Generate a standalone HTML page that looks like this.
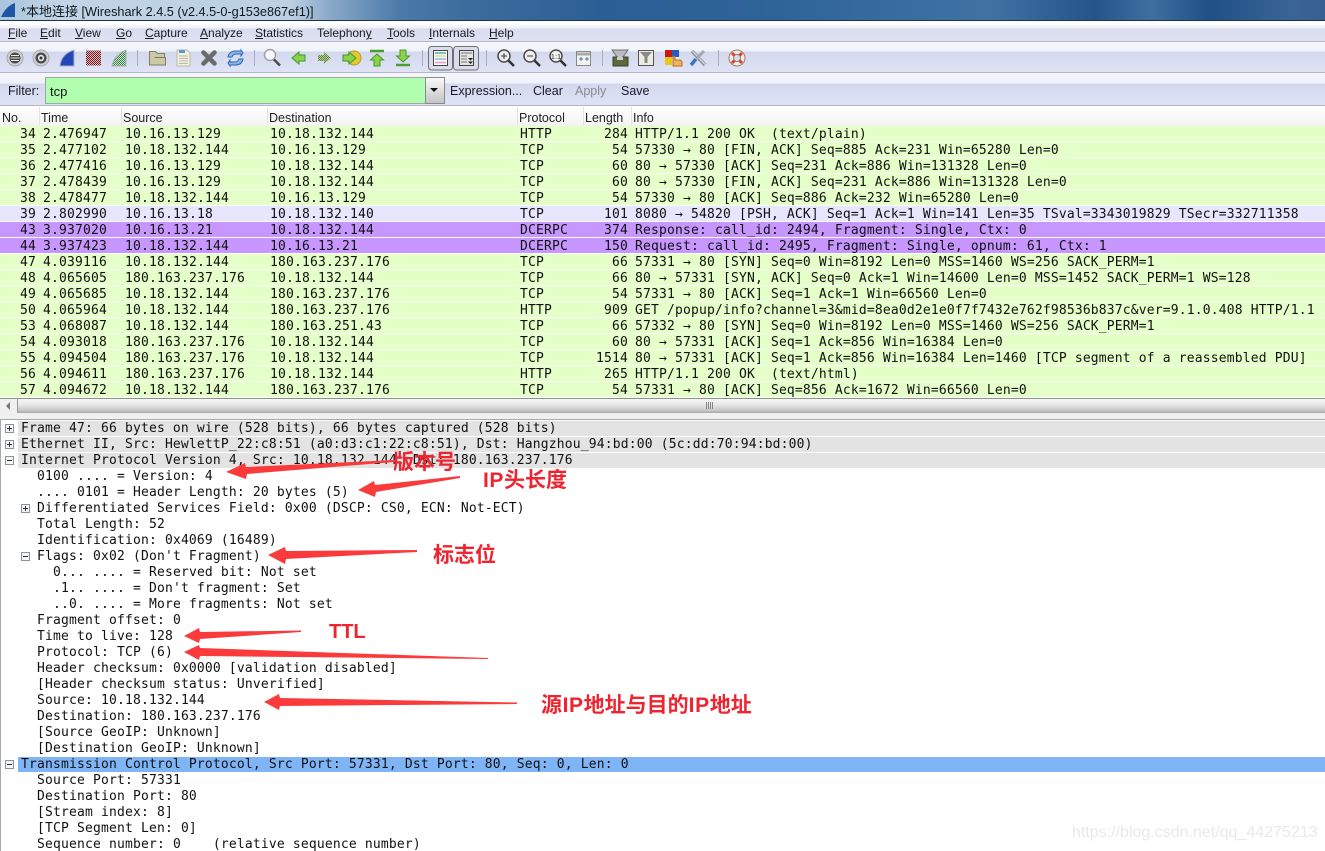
<!DOCTYPE html>
<html><head><meta charset="utf-8"><title>Wireshark</title>
<style>
html,body{margin:0;padding:0;background:#fff}
#p{position:relative;width:1325px;height:851px;overflow:hidden;background:#fff;font-family:"Liberation Sans","Noto Sans CJK SC",sans-serif;color:#111}
.a{position:absolute;white-space:pre}
.bar{position:absolute;left:0;width:1325px}
.mn{font-size:12px;top:26px;line-height:15px;color:#1a1a1a}
.mn u{text-decoration:underline}
.fb{font-size:12.5px;top:84px;line-height:15px;color:#1a1a2a}
.hd{font-size:12.5px;top:111px;line-height:15px;color:#222}
.sp{position:absolute;top:107px;height:18px;width:1px;background:#e2e2e2}
#rows{position:absolute;left:0;top:126px;width:1325px;font:13px/15px "DejaVu Sans Mono",monospace;letter-spacing:.17px;color:#111}
.r{position:relative;height:15px;border-bottom:1px solid #fff;white-space:pre}
.r span{position:absolute;top:1px}
.g{background:#e4ffc7}.v{background:#e7e6ff}.u{background:#c797ff}
.n{right:1289px}.t{left:43px}.s{left:125px}.d{left:270px}.o{left:520px}.l{right:697px}.i{left:635px}
#det{position:absolute;left:0;top:420px;width:1325px;font:13px/15px "DejaVu Sans Mono",monospace;letter-spacing:.17px;color:#111}
.q{position:relative;height:16px;white-space:pre}
.q b{font-weight:normal;position:absolute;top:1px}
.l0 b{left:21px}.l1 b{left:37px}.l2 b{left:53px}
.gr::before,.bl::before{content:"";position:absolute;left:18px;right:0;top:1px;height:15px;background:#e3e3e3}
.bl::before{background:#7fb5f7}
.bx{position:absolute;width:7px;height:7px;border:1px solid #8a93a0;background:#f4f4f4;top:4px}
.bx::before{content:"";position:absolute;left:1px;top:3px;width:5px;height:1px;background:#333}
.pl::after{content:"";position:absolute;left:3px;top:1px;width:1px;height:5px;background:#333}
.cn{position:absolute;color:#ee2430;font:bold 21px/26px "Liberation Sans","Noto Sans CJK SC",sans-serif;white-space:pre}
.cn i{font-style:normal;letter-spacing:.6px}
</style></head><body><div id="p">

<div class="bar" style="top:0;height:20px;background:linear-gradient(90deg,#a9c4dd 0,#c2d5e6 60px,#bdd0e3 290px,#8aa9c9 330px,#4b7aa8 400px,#3c6c9d 470px,#2c5f95 600px,#2e6398 760px,#4072a4 990px,#245489 1095px,#3f6fa1 1150px,#1f5086 1210px,#3a6496 1290px,#37608f 1325px)"></div>
<div class="a" style="left:21px;top:3px;font-size:12.7px;line-height:17px;color:#101820">*<span style="font-size:13px">本地连接</span> [Wireshark 2.4.5 (v2.4.5-0-g153e867ef1)]</div>
<svg class="a" style="left:0;top:0" width="18" height="20"><path d="M1 17 Q6 6 15 3 L15 17Z" fill="#1f55a8"/></svg>
<div class="bar" style="top:20px;height:1px;background:#1d3348"></div>
<div class="bar" style="top:21px;height:20px;background:linear-gradient(#f6f8fc 0,#fff 2px,#eef1f9 7px,#d9ddf0 8px,#dde1f3 100%)"></div>
<div class="bar" style="top:41px;height:1px;background:#b3b6c8"></div>
<div class="bar" style="top:42px;height:30px;background:linear-gradient(#f4f6fb 0,#f0f3fa 9px,#d3d8ee 10px,#dfe3f5 100%)"></div>
<div class="bar" style="top:72px;height:1px;background:#b3b6c8"></div>
<div class="bar" style="top:73px;height:32px;background:linear-gradient(#f4f6fb 0,#eff2fa 10px,#d3d8ee 11px,#dfe3f5 100%)"></div>
<div class="bar" style="top:105px;height:1px;background:#b3b6c8"></div>
<div class="bar" style="top:106px;height:20px;background:linear-gradient(#fff,#f3f3f3)"></div>

<div class="a mn" style="left:8px"><u>F</u>ile</div>
<div class="a mn" style="left:40px"><u>E</u>dit</div>
<div class="a mn" style="left:75px"><u>V</u>iew</div>
<div class="a mn" style="left:116px"><u>G</u>o</div>
<div class="a mn" style="left:145px"><u>C</u>apture</div>
<div class="a mn" style="left:200px"><u>A</u>nalyze</div>
<div class="a mn" style="left:255px"><u>S</u>tatistics</div>
<div class="a mn" style="left:317px">Telephon<u>y</u></div>
<div class="a mn" style="left:387px"><u>T</u>ools</div>
<div class="a mn" style="left:429px"><u>I</u>nternals</div>
<div class="a mn" style="left:489px"><u>H</u>elp</div>

<svg class="a" style="left:0;top:42px" width="760" height="30" viewBox="0 42 760 30">
<defs>
<pattern id="dr" width="2" height="2" patternUnits="userSpaceOnUse"><rect width="2" height="2" fill="#c8c8d0"/><rect width="1" height="1" fill="#8c0c10"/><rect x="1" y="1" width="1" height="1" fill="#8c0c10"/></pattern>
<pattern id="dg" width="2" height="2" patternUnits="userSpaceOnUse"><rect width="2" height="2" fill="#d8dce8"/><rect width="1" height="1" fill="#2f8a2f"/><rect x="1" y="1" width="1" height="1" fill="#2f8a2f"/></pattern>
<pattern id="dh" width="2" height="2" patternUnits="userSpaceOnUse"><rect width="2" height="2" fill="#b8c89a"/><rect width="1" height="1" fill="#5f8a3a"/><rect x="1" y="1" width="1" height="1" fill="#5f8a3a"/></pattern>
</defs>
<circle cx="15" cy="58" r="8" fill="#cfcfd4" stroke="#a8a8ae"/><circle cx="15" cy="58" r="5.5" fill="#4a4a4e"/><path d="M11 55.5h8M10.5 58h9M11 60.5h8" stroke="#e8e8e8"/>
<circle cx="41" cy="58" r="8" fill="#cfcfd4" stroke="#a8a8ae"/><circle cx="41" cy="58" r="5.5" fill="#4a4a4e"/><circle cx="41" cy="58" r="3.2" fill="#e8e8e8"/><circle cx="41" cy="58" r="1.5" fill="#333"/>
<path d="M60 66Q61 54 74 50L74 66Z" fill="#2347b8" stroke="#aab0c4"/>
<rect x="86" y="50.5" width="15" height="15" fill="url(#dr)"/>
<path d="M112 66Q114 55 126 50L126 66Z" fill="url(#dg)" stroke="#a8b0a8"/>
<path d="M137.5 50v16M254.5 50v16M422.5 50v16M486.5 50v16M602.500 50v16M718.500 50v16" stroke="#a9adbd"/>
<path d="M149.500 65V51.500h6l2 2h7v4h-9l-1 0h11v7.500z" fill="#cbc9a6" stroke="#7e7e62"/>
<path d="M177 50h10l3 3v13h-13z" fill="#f3f1de" stroke="#b9b9a8"/><path d="M179 50h6v3h-6z" fill="#5a96d8"/><path d="M179 56h9M179 58.500h9M179 61h9M179 63.500h9" stroke="#b8b8a8"/>
<path d="M203.500 52.500l11 11M214.500 52.500l-11 11" stroke="#6a6a6a" stroke-width="4.500" stroke-linecap="round"/>
<path d="M228 57q1-6 8-6h5v-1l2 3-2 3v-2h-5q-3 0-4 3z" fill="#8cb8e8" stroke="#2a68b8"/><path d="M243 59q-1 6-8 6h-5v1l-2-3 2-3v2h5q3 0 4-3z" fill="#8cb8e8" stroke="#2a68b8"/>
<circle cx="270" cy="55" r="5.500" fill="#f4f7fb" stroke="#a0a0a0" stroke-width="1.500"/><path d="M274 59.500l6 6" stroke="#4a4a4a" stroke-width="2.500"/>
<path d="M292 58l7-6v3h6v6h-6v3z" fill="#8ed04a" stroke="#3f9a2a"/>
<path d="M331 58l-7-6v3h-6v6h6v3z" fill="url(#dh)"/>
<circle cx="354" cy="58" r="7" fill="#e8c830" stroke="#b89a20"/><path d="M343 55h6v-3l7 6-7 6v-3h-6z" fill="#8ed04a" stroke="#3f9a2a"/>
<path d="M370 51h14" stroke="#4aa02a" stroke-width="2.500"/><path d="M377 54l6.500 6h-3.500v6h-6v-6h-3.500z" fill="#8ed04a" stroke="#3f9a2a"/>
<path d="M396 65h14" stroke="#4aa02a" stroke-width="2.500"/><path d="M403 62l6.500-6h-3.500v-6h-6v6h-3.500z" fill="#8ed04a" stroke="#3f9a2a"/>
<rect x="428.500" y="46.500" width="24" height="23.500" rx="3" fill="#d9dcea" stroke="#6f6f78"/>
<rect x="453.500" y="46.500" width="25" height="23.500" rx="3" fill="#d9dcea" stroke="#6f6f78"/>
<rect x="433.500" y="50.500" width="14" height="15" fill="#fff" stroke="#444"/><path d="M435 53h11" stroke="#6ec8b8" stroke-width="2"/><path d="M435 56h11" stroke="#e4e4a8" stroke-width="2"/><path d="M435 59h11" stroke="#a8c8e8" stroke-width="2"/><path d="M435 62.500h11" stroke="#f0a8c8" stroke-width="2"/>
<rect x="459.500" y="50.500" width="14" height="15" fill="#e4e4e4" stroke="#444"/><path d="M461 53h11M461 56h6M461 59h6M461 62h6" stroke="#777"/><path d="M468 58h5l-2.500 2.500zM468 61.500h5l-2.500 2.500z" fill="#222"/>
<g fill="#f0f0f0" stroke="#4c4c4c" stroke-width="1.500"><circle cx="504" cy="56" r="6"/><circle cx="530" cy="56" r="6"/><circle cx="556" cy="56" r="6"/></g>
<path d="M508.500 60.500l5.500 5.500M534.500 60.500l5.500 5.500M560.500 60.500l5.500 5.500" stroke="#333" stroke-width="2.500"/>
<path d="M501 56h6M504 53v6M527 56h6" stroke="#333"/>
<text x="556" y="59" font-size="7.500" text-anchor="middle" fill="#333" font-family="Liberation Sans">1:1</text>
<rect x="576.500" y="51.500" width="14" height="14" fill="#f2f2f2" stroke="#888"/><path d="M577 54h13" stroke="#aaa" stroke-width="3"/><path d="M579 59h4M581 57v4M585 59h4M587 57v4" stroke="#5a78a0"/>
<path d="M612 50h16l-5 7v3h-6v-3z" fill="#b8bcc0" stroke="#707070"/><rect x="613" y="57" width="15" height="9" fill="#5a6a3a" stroke="#3a4428"/><path d="M617 57l3-1 3 1v3h-6z" fill="#c8ccd0"/>
<rect x="638.500" y="50.500" width="15" height="15" fill="#ecebe0" stroke="#555"/><path d="M640 52h12l-4.500 5v6h-3v-6z" fill="#888"/>
<rect x="665" y="50" width="7" height="7" fill="#c81818"/><rect x="672" y="50" width="7" height="7" fill="#2a5cc0"/><rect x="665" y="57" width="7" height="8" fill="#e8c818"/><rect x="672" y="57" width="7" height="8" fill="#e8f0f8"/>
<path d="M673 66v-9q1-2 2 0v3h4q3 0 3 3v3z" fill="#f0b060" stroke="#b87020"/>
<path d="M692 51l13 14" stroke="#8a9098" stroke-width="3.500"/><path d="M692.500 51l13 14" stroke="#d0d4d8" stroke-width="1.500"/><path d="M704 51l-7 7" stroke="#a0a8b0" stroke-width="3"/><path d="M696 59l-5 6" stroke="#3a74c0" stroke-width="3.500"/>
<circle cx="737" cy="58" r="5.800" fill="none" stroke="#ececec" stroke-width="4.500"/><circle cx="737" cy="58" r="8" fill="none" stroke="#a08060"/><circle cx="737" cy="58" r="3.500" fill="none" stroke="#a08060"/>
<path d="M732 53l2.500 2.500M742 53l-2.500 2.500M732 63l2.500-2.500M742 63l-2.500-2.500" stroke="#e04030" stroke-width="3"/>
</svg>

<div class="a fb" style="left:8px">Filter:</div>
<div class="a" style="left:45px;top:77px;width:380px;height:25px;background:#afffaf;border:1px solid #a0a8a0"></div>
<div class="a" style="left:50px;top:84px;font-size:13px;line-height:15px;color:#111">tcp</div>
<div class="a" style="left:425px;top:77px;width:18px;height:25px;background:linear-gradient(#fafafa,#c4c4c4);border:1px solid #8a8a8a"></div>
<div class="a" style="left:430px;top:88px;width:0;height:0;border:4px solid transparent;border-top:4px solid #111;border-bottom:0"></div>
<div class="a fb" style="left:450px">Expression...</div>
<div class="a fb" style="left:533px">Clear</div>
<div class="a fb" style="left:575px;color:#8a8a96">Apply</div>
<div class="a fb" style="left:621px">Save</div>

<div class="a hd" style="left:2px">No.</div><div class="sp" style="left:39px"></div>
<div class="a hd" style="left:41px">Time</div><div class="sp" style="left:121px"></div>
<div class="a hd" style="left:123px">Source</div><div class="sp" style="left:267px"></div>
<div class="a hd" style="left:269px">Destination</div><div class="sp" style="left:517px"></div>
<div class="a hd" style="left:519px">Protocol</div><div class="sp" style="left:583px"></div>
<div class="a hd" style="left:585px">Length</div><div class="sp" style="left:631px"></div>
<div class="a hd" style="left:633px">Info</div>

<div id="rows">
<div class="r g"><span class="n">34</span><span class="t">2.476947</span><span class="s">10.16.13.129</span><span class="d">10.18.132.144</span><span class="o">HTTP</span><span class="l">284</span><span class="i">HTTP/1.1 200 OK  (text/plain)</span></div>
<div class="r g"><span class="n">35</span><span class="t">2.477102</span><span class="s">10.18.132.144</span><span class="d">10.16.13.129</span><span class="o">TCP</span><span class="l">54</span><span class="i">57330 → 80 [FIN, ACK] Seq=885 Ack=231 Win=65280 Len=0</span></div>
<div class="r g"><span class="n">36</span><span class="t">2.477416</span><span class="s">10.16.13.129</span><span class="d">10.18.132.144</span><span class="o">TCP</span><span class="l">60</span><span class="i">80 → 57330 [ACK] Seq=231 Ack=886 Win=131328 Len=0</span></div>
<div class="r g"><span class="n">37</span><span class="t">2.478439</span><span class="s">10.16.13.129</span><span class="d">10.18.132.144</span><span class="o">TCP</span><span class="l">60</span><span class="i">80 → 57330 [FIN, ACK] Seq=231 Ack=886 Win=131328 Len=0</span></div>
<div class="r g"><span class="n">38</span><span class="t">2.478477</span><span class="s">10.18.132.144</span><span class="d">10.16.13.129</span><span class="o">TCP</span><span class="l">54</span><span class="i">57330 → 80 [ACK] Seq=886 Ack=232 Win=65280 Len=0</span></div>
<div class="r v"><span class="n">39</span><span class="t">2.802990</span><span class="s">10.16.13.18</span><span class="d">10.18.132.140</span><span class="o">TCP</span><span class="l">101</span><span class="i">8080 → 54820 [PSH, ACK] Seq=1 Ack=1 Win=141 Len=35 TSval=3343019829 TSecr=332711358</span></div>
<div class="r u"><span class="n">43</span><span class="t">3.937020</span><span class="s">10.16.13.21</span><span class="d">10.18.132.144</span><span class="o">DCERPC</span><span class="l">374</span><span class="i">Response: call_id: 2494, Fragment: Single, Ctx: 0</span></div>
<div class="r u"><span class="n">44</span><span class="t">3.937423</span><span class="s">10.18.132.144</span><span class="d">10.16.13.21</span><span class="o">DCERPC</span><span class="l">150</span><span class="i">Request: call_id: 2495, Fragment: Single, opnum: 61, Ctx: 1</span></div>
<div class="r g"><span class="n">47</span><span class="t">4.039116</span><span class="s">10.18.132.144</span><span class="d">180.163.237.176</span><span class="o">TCP</span><span class="l">66</span><span class="i">57331 → 80 [SYN] Seq=0 Win=8192 Len=0 MSS=1460 WS=256 SACK_PERM=1</span></div>
<div class="r g"><span class="n">48</span><span class="t">4.065605</span><span class="s">180.163.237.176</span><span class="d">10.18.132.144</span><span class="o">TCP</span><span class="l">66</span><span class="i">80 → 57331 [SYN, ACK] Seq=0 Ack=1 Win=14600 Len=0 MSS=1452 SACK_PERM=1 WS=128</span></div>
<div class="r g"><span class="n">49</span><span class="t">4.065685</span><span class="s">10.18.132.144</span><span class="d">180.163.237.176</span><span class="o">TCP</span><span class="l">54</span><span class="i">57331 → 80 [ACK] Seq=1 Ack=1 Win=66560 Len=0</span></div>
<div class="r g"><span class="n">50</span><span class="t">4.065964</span><span class="s">10.18.132.144</span><span class="d">180.163.237.176</span><span class="o">HTTP</span><span class="l">909</span><span class="i">GET /popup/info?channel=3&amp;mid=8ea0d2e1e0f7f7432e762f98536b837c&amp;ver=9.1.0.408 HTTP/1.1</span></div>
<div class="r g"><span class="n">53</span><span class="t">4.068087</span><span class="s">10.18.132.144</span><span class="d">180.163.251.43</span><span class="o">TCP</span><span class="l">66</span><span class="i">57332 → 80 [SYN] Seq=0 Win=8192 Len=0 MSS=1460 WS=256 SACK_PERM=1</span></div>
<div class="r g"><span class="n">54</span><span class="t">4.093018</span><span class="s">180.163.237.176</span><span class="d">10.18.132.144</span><span class="o">TCP</span><span class="l">60</span><span class="i">80 → 57331 [ACK] Seq=1 Ack=856 Win=16384 Len=0</span></div>
<div class="r g"><span class="n">55</span><span class="t">4.094504</span><span class="s">180.163.237.176</span><span class="d">10.18.132.144</span><span class="o">TCP</span><span class="l">1514</span><span class="i">80 → 57331 [ACK] Seq=1 Ack=856 Win=16384 Len=1460 [TCP segment of a reassembled PDU]</span></div>
<div class="r g"><span class="n">56</span><span class="t">4.094611</span><span class="s">180.163.237.176</span><span class="d">10.18.132.144</span><span class="o">HTTP</span><span class="l">265</span><span class="i">HTTP/1.1 200 OK  (text/html)</span></div>
<div class="r g"><span class="n">57</span><span class="t">4.094672</span><span class="s">10.18.132.144</span><span class="d">180.163.237.176</span><span class="o">TCP</span><span class="l">54</span><span class="i">57331 → 80 [ACK] Seq=856 Ack=1672 Win=66560 Len=0</span></div>
</div>

<div class="a" style="left:0;top:398px;width:1325px;height:14px;background:linear-gradient(#f6f6f6,#e8e8e8 40%,#c8c8c8 80%,#a8a8a8);border-top:1px solid #8f8f8f"></div>
<div class="a" style="left:0;top:399px;width:17px;height:14px;background:#f0f0f0;border-right:1px solid #999"></div>
<div class="a" style="left:6px;top:402px;width:0;height:0;border:4px solid transparent;border-right:4px solid #777;border-left:0"></div>
<div class="a" style="left:706px;top:402px;width:1px;height:7px;background:#888;box-shadow:2px 0 #888,4px 0 #888,6px 0 #888"></div>
<div class="a" style="left:0;top:413px;width:1325px;height:6px;background:#f0f0f0;border-bottom:1px solid #a8a8a8"></div>
<div class="a" style="left:0;top:420px;width:1px;height:431px;background:#a8a8a8"></div>

<div id="det">
<div class="q l0 gr"><i class="bx pl" style="left:5px"></i><b>Frame 47: 66 bytes on wire (528 bits), 66 bytes captured (528 bits)</b></div>
<div class="q l0 gr"><i class="bx pl" style="left:5px"></i><b>Ethernet II, Src: HewlettP_22:c8:51 (a0:d3:c1:22:c8:51), Dst: Hangzhou_94:bd:00 (5c:dd:70:94:bd:00)</b></div>
<div class="q l0 gr"><i class="bx" style="left:5px"></i><b>Internet Protocol Version 4, Src: 10.18.132.144, Dst: 180.163.237.176</b></div>
<div class="q l1"><b>0100 .... = Version: 4</b></div>
<div class="q l1"><b>.... 0101 = Header Length: 20 bytes (5)</b></div>
<div class="q l1"><i class="bx pl" style="left:21px"></i><b>Differentiated Services Field: 0x00 (DSCP: CS0, ECN: Not-ECT)</b></div>
<div class="q l1"><b>Total Length: 52</b></div>
<div class="q l1"><b>Identification: 0x4069 (16489)</b></div>
<div class="q l1"><i class="bx" style="left:21px"></i><b>Flags: 0x02 (Don't Fragment)</b></div>
<div class="q l2"><b>0... .... = Reserved bit: Not set</b></div>
<div class="q l2"><b>.1.. .... = Don't fragment: Set</b></div>
<div class="q l2"><b>..0. .... = More fragments: Not set</b></div>
<div class="q l1"><b>Fragment offset: 0</b></div>
<div class="q l1"><b>Time to live: 128</b></div>
<div class="q l1"><b>Protocol: TCP (6)</b></div>
<div class="q l1"><b>Header checksum: 0x0000 [validation disabled]</b></div>
<div class="q l1"><b>[Header checksum status: Unverified]</b></div>
<div class="q l1"><b>Source: 10.18.132.144</b></div>
<div class="q l1"><b>Destination: 180.163.237.176</b></div>
<div class="q l1"><b>[Source GeoIP: Unknown]</b></div>
<div class="q l1"><b>[Destination GeoIP: Unknown]</b></div>
<div class="q l0 bl"><i class="bx" style="left:5px"></i><b>Transmission Control Protocol, Src Port: 57331, Dst Port: 80, Seq: 0, Len: 0</b></div>
<div class="q l1"><b>Source Port: 57331</b></div>
<div class="q l1"><b>Destination Port: 80</b></div>
<div class="q l1"><b>[Stream index: 8]</b></div>
<div class="q l1"><b>[TCP Segment Len: 0]</b></div>
<div class="q l1"><b>Sequence number: 0    (relative sequence number)</b></div>
</div>

<svg class="a" style="left:0;top:0" width="1325" height="851" fill="#fb3b3b">
<polygon points="226,472 245,463 246,467 395,460 395,462 247,474 246,479"/>
<polygon points="358,490 374,481 375,485 460,476 460,478 376,492 375,497"/>
<polygon points="268,555 285,547 286,551 417,550 417,552 286,559 285,564"/>
<polygon points="184,636 199,628 200,632 301,630.5 301,632 200,639 199,643"/>
<polygon points="184,652 199,645 200,648 488,658 488,659 200,656 199,660"/>
<polygon points="264,702 279,694 280,698 517,702.5 517,704 280,706 279,710"/>
</svg>

<div class="cn" style="left:393px;top:450px">版本号</div>
<div class="cn" style="left:483px;top:468px"><i>IP</i>头长度</div>
<div class="cn" style="left:433px;top:543px">标志位</div>
<div class="cn" style="left:329px;top:619px;font-size:20px">TTL</div>
<div class="cn" style="left:541px;top:693px"><i>源IP</i>地址与目的<i>IP</i>地址</div>

<div class="a" style="left:1072px;top:824px;font-size:16px;line-height:18px;color:#e9e9e9">https://blog.csdn.net/qq_44275213</div>
</div></body></html>
